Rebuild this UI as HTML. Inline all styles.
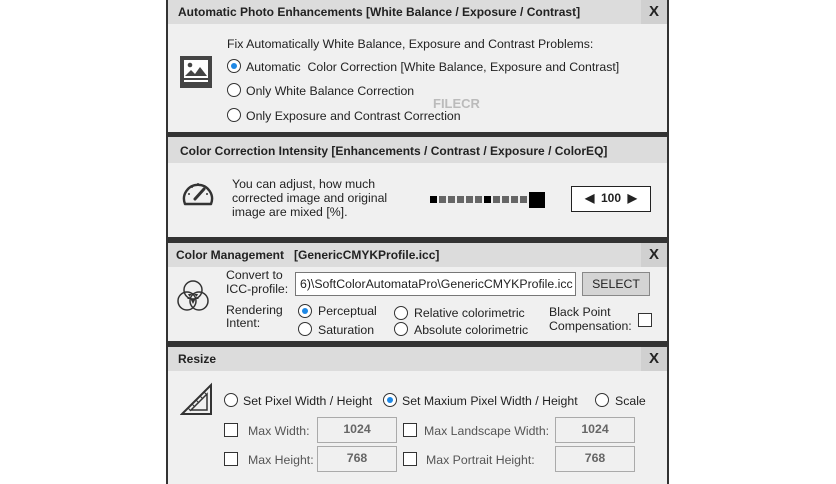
<!DOCTYPE html><html><head><style>
*{margin:0;padding:0;box-sizing:border-box}
body{width:836px;height:484px;background:#fff;position:relative;font-family:"Liberation Sans",Arial,sans-serif;font-size:12.3px;color:#222;overflow:hidden}
.p{position:absolute;left:166px;width:503px;background:#f0f0f0;border-left:2px solid #333;border-right:2px solid #333}
.h{position:absolute;left:0;right:0;top:0;height:24px;background:#dcdcdc;font-weight:bold;font-size:12px;line-height:24px;padding-left:10px;color:#222}
.x{position:absolute;right:0;top:0;width:26px;height:24px;background:#d0d0d0;font-size:15px;text-align:center;line-height:24px;font-weight:bold}
.a{position:absolute;white-space:nowrap}
.r{position:absolute;width:14px;height:14px;border:1.3px solid #333;border-radius:50%;background:#fff}
.r.on::after{content:"";position:absolute;left:2.5px;top:2.5px;width:6px;height:6px;border-radius:50%;background:#1e88e5}
.c{position:absolute;width:14px;height:14px;border:1.3px solid #333;background:#fff}
.f{position:absolute;width:80px;height:26px;border:1px solid #aaa;background:#f0f0f0;text-align:center;line-height:22px;font-weight:bold;color:#666}
.sep{position:absolute;left:166px;width:503px;background:#333}
</style></head><body>
<div class="p" style="top:0;height:133px">
<div class="h">Automatic Photo Enhancements [White Balance / Exposure / Contrast]</div><div class="x">X</div>
<svg class="a" style="left:12px;top:56px" width="34" height="34" viewBox="0 0 34 34"><rect x="0" y="0" width="32" height="32" fill="#444"/><rect x="4" y="4" width="24" height="18" fill="#fff"/><circle cx="10" cy="9" r="2.3" fill="#444"/><path d="M5 20 L11 14 L15 18 L20 11 L27 20 Z" fill="#444"/><rect x="4" y="24" width="24" height="2" fill="#fff"/></svg>
<div class="a" style="left:59px;top:37px">Fix Automatically White Balance, Exposure and Contrast Problems:</div>
<div class="r on" style="left:59px;top:59px"></div><div class="a" style="left:78px;top:60px">Automatic&nbsp; Color Correction [White Balance, Exposure and Contrast]</div>
<div class="r" style="left:59px;top:83px"></div><div class="a" style="left:78px;top:84px">Only White Balance Correction</div>
<div class="r" style="left:59px;top:108px"></div><div class="a" style="left:78px;top:109px">Only Exposure and Contrast Correction</div>
<div class="a" style="left:265px;top:96px;font-weight:bold;font-size:13px;color:#bbb">FILECR</div>
</div>
<div class="sep" style="top:132px;height:5px"></div>
<div class="p" style="top:137px;height:101px">
<div class="h" style="height:26px;line-height:28px;padding-left:12px">Color Correction Intensity [Enhancements / Contrast / Exposure / ColorEQ]</div>
<svg class="a" style="left:13px;top:41px" width="34" height="30" viewBox="0 0 34 30"><path d="M4 26 A14 14 0 1 1 30 26 Z" fill="none" stroke="#333" stroke-width="2.4" stroke-linejoin="round"/><path d="M14 21 L23 11" stroke="#333" stroke-width="3" stroke-linecap="round"/><circle cx="8" cy="16" r="1" fill="#333"/><circle cx="11" cy="9" r="1" fill="#333"/><circle cx="17" cy="6" r="1" fill="#333"/><circle cx="26" cy="16" r="1" fill="#333"/></svg>
<div class="a" style="left:64px;top:40px;line-height:14px">You can adjust, how much<br>corrected image and original<br>image are mixed [%].</div>
<svg class="a" style="left:262px;top:54px" width="118" height="18"><g fill="#666"><rect x="0" y="5" width="7" height="7" fill="#000"/><rect x="9" y="5" width="7" height="7"/><rect x="18" y="5" width="7" height="7"/><rect x="27" y="5" width="7" height="7"/><rect x="36" y="5" width="7" height="7"/><rect x="45" y="5" width="7" height="7"/><rect x="54" y="5" width="7" height="7" fill="#000"/><rect x="63" y="5" width="7" height="7"/><rect x="72" y="5" width="7" height="7"/><rect x="81" y="5" width="7" height="7"/><rect x="90" y="5" width="7" height="7"/><rect x="99" y="1" width="16" height="16" fill="#000"/></g></svg>
<div class="a" style="left:403px;top:49px;width:80px;height:26px;border:1.5px solid #222;background:#fff;font-weight:bold;font-size:12px;line-height:23px;text-align:center">◀ &nbsp;100&nbsp; ▶</div>
</div>
<div class="sep" style="top:237px;height:6px"></div>
<div class="p" style="top:243px;height:99px">
<div class="h" style="padding-left:8px">Color Management&nbsp;&nbsp; [GenericCMYKProfile.icc]</div><div class="x">X</div>
<svg class="a" style="left:8px;top:36px" width="34" height="36" viewBox="0 0 34 36"><g fill="none" stroke="#333" stroke-width="1.5"><circle cx="17" cy="11" r="9"/><circle cx="11" cy="22" r="9"/><circle cx="23" cy="22" r="9"/></g><path d="M17 14 L11 20 L23 20 Z M12 15 L22 15 L17 25 Z" fill="#333"/></svg>
<div class="a" style="left:58px;top:25px;line-height:14px">Convert to<br>ICC-profile:</div>
<div class="a" style="left:127px;top:29px;width:281px;height:24px;border:1px solid #777;background:#fff;line-height:22px;padding-left:4px;overflow:hidden">6)\SoftColorAutomataPro\GenericCMYKProfile.icc</div>
<div class="a" style="left:414px;top:29px;width:68px;height:24px;border:1px solid #888;background:#d4d4d4;line-height:22px;text-align:center">SELECT</div>
<div class="a" style="left:58px;top:61px;line-height:13px">Rendering<br>Intent:</div>
<div class="r on" style="left:130px;top:61px"></div><div class="a" style="left:150px;top:61px">Perceptual</div>
<div class="r" style="left:130px;top:79px"></div><div class="a" style="left:150px;top:80px">Saturation</div>
<div class="r" style="left:226px;top:63px"></div><div class="a" style="left:246px;top:63px">Relative colorimetric</div>
<div class="r" style="left:226px;top:79px"></div><div class="a" style="left:246px;top:80px">Absolute colorimetric</div>
<div class="a" style="left:381px;top:62px;line-height:14px">Black Point<br>Compensation:</div>
<div class="c" style="left:470px;top:70px"></div>
</div>
<div class="sep" style="top:341px;height:6px"></div>
<div class="p" style="top:347px;height:137px">
<div class="h">Resize</div><div class="x">X</div>
<svg class="a" style="left:12px;top:35px" width="34" height="34" viewBox="0 0 34 34"><path d="M2 32 L31 3 L31 32 Z" fill="none" stroke="#333" stroke-width="2"/><path d="M11 28 L27 12 L27 28 Z" fill="none" stroke="#333" stroke-width="1.5"/><g stroke="#333" stroke-width="1"><path d="M8 26 l3 3 M12 22 l3 3 M16 18 l3 3 M20 14 l3 3 M24 10 l3 3"/></g></svg>
<div class="r" style="left:56px;top:46px"></div><div class="a" style="left:75px;top:47px">Set Pixel Width / Height</div>
<div class="r on" style="left:215px;top:46px"></div><div class="a" style="left:234px;top:47px">Set Maxium Pixel Width / Height</div>
<div class="r" style="left:427px;top:46px"></div><div class="a" style="left:447px;top:47px">Scale</div>
<div class="c" style="left:56px;top:76px"></div><div class="a" style="left:80px;top:77px;color:#555">Max Width:</div>
<div class="f" style="left:149px;top:70px">1024</div>
<div class="c" style="left:235px;top:76px"></div><div class="a" style="left:256px;top:77px;color:#555">Max Landscape Width:</div>
<div class="f" style="left:387px;top:70px">1024</div>
<div class="c" style="left:56px;top:105px"></div><div class="a" style="left:80px;top:106px;color:#555">Max Height:</div>
<div class="f" style="left:149px;top:99px">768</div>
<div class="c" style="left:235px;top:105px"></div><div class="a" style="left:258px;top:106px;color:#555">Max Portrait Height:</div>
<div class="f" style="left:387px;top:99px">768</div>
</div>
</body></html>
